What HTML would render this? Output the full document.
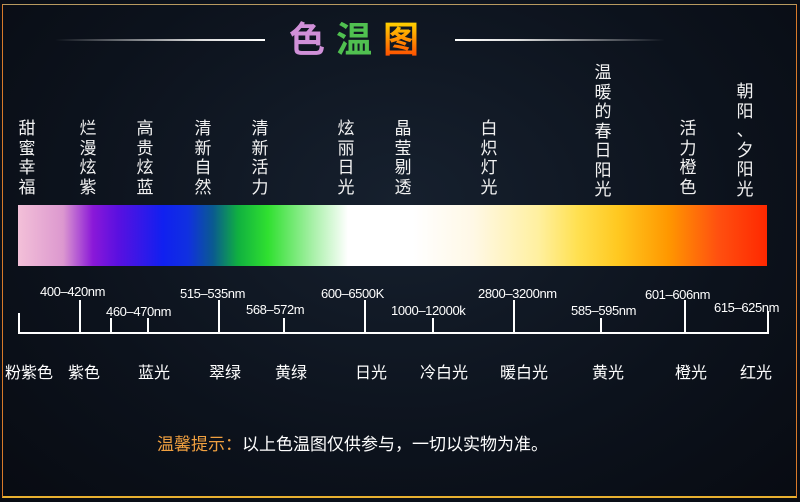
<!DOCTYPE html>
<html><head><meta charset="utf-8"><style>
html,body{margin:0;padding:0;}
body{width:800px;height:502px;position:relative;overflow:hidden;background:radial-gradient(ellipse at 50% 40%,#16202e 0%,#0c121c 60%,#080b12 100%);font-family:"Liberation Sans","Noto Sans CJK SC",sans-serif;color:#fff;}
.frame{position:absolute;left:2px;top:4px;width:793px;height:491px;border:1.5px solid #d87a2a;border-bottom:2px solid #e8b030;border-top:1.5px solid #b89a60;}
.a{position:absolute;white-space:nowrap;}
.v{position:absolute;width:22px;font-size:17px;line-height:19.5px;text-align:center;color:#f2f2f2;}
.bar{position:absolute;left:18px;top:205px;width:749px;height:61px;background:linear-gradient(to right,#f3c0d8 0px,#dc98cf 45px,#8a18d8 75px,#5a10e0 100px,#1020f0 145px,#1030e0 170px,#0a5a90 195px,#10b040 220px,#30e030 250px,#a8f0a8 295px,#ffffff 330px,#ffffff 395px,#fff8e6 455px,#fff0a0 520px,#ffe050 560px,#ffc820 600px,#ff9800 650px,#ff5010 700px,#ff2800 749px);}
.t{position:absolute;width:2px;background:#fff;}
.n{position:absolute;font-size:13px;color:#fff;letter-spacing:-0.4px;}
.b{position:absolute;top:359px;font-size:16px;color:#fff;}
</style></head><body>
<div class="frame"></div>
<div class="a" style="left:55px;top:39px;width:210px;height:2px;background:linear-gradient(to right,rgba(255,255,255,0),#ddd 70%,#fff)"></div>
<div class="a" style="left:455px;top:39px;width:210px;height:2px;background:linear-gradient(to left,rgba(255,255,255,0),#ddd 70%,#fff)"></div>
<div class="a" style="left:289px;top:18px;font-size:36px;font-weight:bold;line-height:44px;letter-spacing:11px">
<span style="color:#d090d8">色</span><span style="color:#50c050">温</span><span style="color:#ff7a10;background:linear-gradient(#ffe000,#ff4000);-webkit-background-clip:text;background-clip:text;-webkit-text-fill-color:transparent">图</span></div>

<div class="v" style="left:16px;top:119px">甜<br>蜜<br>幸<br>福</div>
<div class="v" style="left:77px;top:119px">烂<br>漫<br>炫<br>紫</div>
<div class="v" style="left:134px;top:119px">高<br>贵<br>炫<br>蓝</div>
<div class="v" style="left:192px;top:119px">清<br>新<br>自<br>然</div>
<div class="v" style="left:249px;top:119px">清<br>新<br>活<br>力</div>
<div class="v" style="left:335px;top:119px">炫<br>丽<br>日<br>光</div>
<div class="v" style="left:392px;top:119px">晶<br>莹<br>剔<br>透</div>
<div class="v" style="left:478px;top:119px">白<br>炽<br>灯<br>光</div>
<div class="v" style="left:592px;top:63px">温<br>暖<br>的<br>春<br>日<br>阳<br>光</div>
<div class="v" style="left:677px;top:119px">活<br>力<br>橙<br>色</div>
<div class="v" style="left:734px;top:82px">朝<br>阳<br>、<br>夕<br>阳<br>光</div>

<div class="bar"></div>

<div class="a" style="left:18px;top:332px;width:751px;height:2px;background:#fff"></div>
<div class="t" style="left:18px;top:313px;height:20px"></div>
<div class="t" style="left:79px;top:300px;height:33px"></div>
<div class="t" style="left:110px;top:318px;height:15px"></div>
<div class="t" style="left:147px;top:318px;height:15px"></div>
<div class="t" style="left:218px;top:300px;height:33px"></div>
<div class="t" style="left:283px;top:318px;height:15px"></div>
<div class="t" style="left:364px;top:300px;height:33px"></div>
<div class="t" style="left:432px;top:318px;height:15px"></div>
<div class="t" style="left:513px;top:300px;height:33px"></div>
<div class="t" style="left:600px;top:318px;height:15px"></div>
<div class="t" style="left:684px;top:300px;height:33px"></div>
<div class="t" style="left:767px;top:311px;height:22px"></div>

<div class="n" style="left:40px;top:284px">400–420nm</div>
<div class="n" style="left:106px;top:304px">460–470nm</div>
<div class="n" style="left:180px;top:286px">515–535nm</div>
<div class="n" style="left:246px;top:302px">568–572m</div>
<div class="n" style="left:321px;top:286px">600–6500K</div>
<div class="n" style="left:391px;top:303px">1000–12000k</div>
<div class="n" style="left:478px;top:286px">2800–3200nm</div>
<div class="n" style="left:571px;top:303px">585–595nm</div>
<div class="n" style="left:645px;top:287px">601–606nm</div>
<div class="n" style="left:714px;top:300px">615–625nm</div>

<div class="b" style="left:5px">粉紫色</div>
<div class="b" style="left:68px">紫色</div>
<div class="b" style="left:138px">蓝光</div>
<div class="b" style="left:209px">翠绿</div>
<div class="b" style="left:275px">黄绿</div>
<div class="b" style="left:355px">日光</div>
<div class="b" style="left:420px">冷白光</div>
<div class="b" style="left:500px">暖白光</div>
<div class="b" style="left:592px">黄光</div>
<div class="b" style="left:675px">橙光</div>
<div class="b" style="left:740px">红光</div>

<div class="a" style="left:157px;top:434px;font-size:17px;line-height:22px"><span style="color:#f0a040">温馨提示：</span>以上色温图仅供参与，一切以实物为准。</div>
</body></html>
